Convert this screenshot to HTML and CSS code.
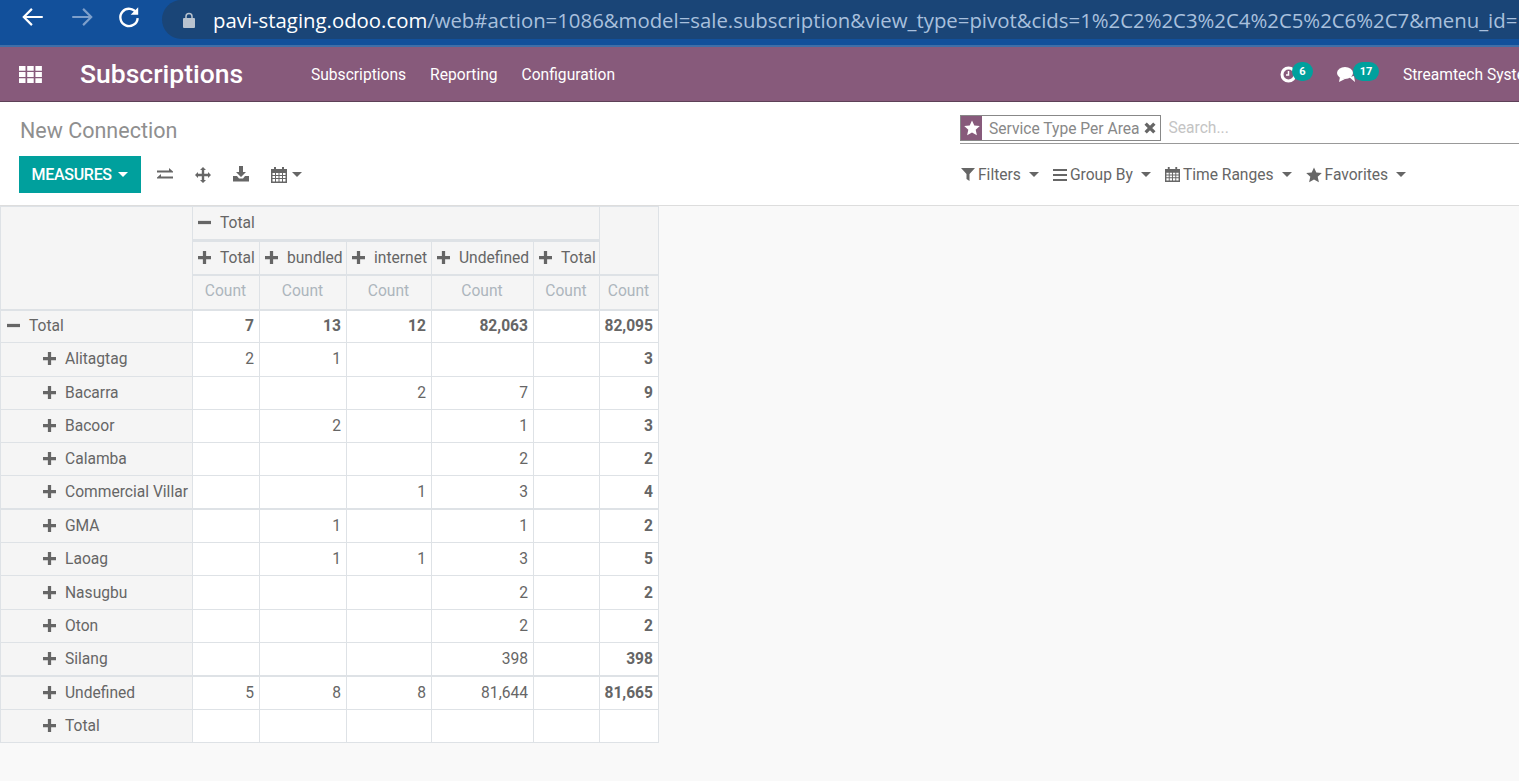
FILE: index.html
```html
<!DOCTYPE html>
<html lang="en">
<head>
  <meta charset="UTF-8">
  <title>Subscriptions</title>
  <link rel="stylesheet" href="styles.css">
</head>
<body>

  <svg class="defs" width="0" height="0">
    <symbol id="plus" viewBox="0 0 12 12"><path d="M4.500 0h3v4.500H12v3H7.500V12h-3V7.500H0v-3h4.500z"/></symbol>
    <symbol id="minus" viewBox="0 0 12 12"><path d="M0 4.500h12v3H0z"/></symbol>
    <symbol id="cal" viewBox="0 0 16 16"><path d="M3 0h2v2h6V0h2v2h3v14H0V2h3zM1.500 6v2h2.500V6zm3.500 0v2h2.500V6zm3.500 0v2H11V6zm3.500 0v2h2.500V6zM1.500 9v2h2.500V9zm3.500 0v2h2.500V9zm3.500 0v2H11V9zm3.500 0v2h2.500V9zM1.500 12v2.500h2.500V12zm3.500 0v2.500h2.500V12zm3.500 0v2.500H11V12zm3.500 0v2.500h2.500V12z" fill-rule="evenodd"/></symbol>
    <symbol id="star" viewBox="0 0 16 16"><path d="M8 .5l2.300 5 5.500.6-4.100 3.700 1.200 5.400L8 12.500l-4.900 2.700 1.200-5.400L.2 6.100l5.500-.6z"/></symbol>
  </svg>

  <div class="browser-bar">
    <svg class="nav-icon first" width="26" height="26" viewBox="0 0 24 24"><path d="M21 12H4M11 4.500L3.500 12l7.500 7.500" fill="none" stroke="#fff" stroke-width="2"/></svg>
    <svg class="nav-icon" width="26" height="26" viewBox="0 0 24 24"><path d="M3 12h17M13 4.500l7.500 7.500-7.500 7.500" fill="none" stroke="#7d9fcb" stroke-width="2"/></svg>
    <svg class="nav-icon reload" width="26" height="26" viewBox="0 0 24 24"><path d="M19 8.500A8 8 0 1 0 20 13" fill="none" stroke="#fff" stroke-width="2.200"/><path d="M20.500 3v7h-7z" fill="#fff"/></svg>
    <div class="url-box">
      <svg class="lock" width="12" height="16" viewBox="0 0 12 16"><path d="M3 7V4.500a3 3 0 0 1 6 0V7" fill="none" stroke="#b9c3cf" stroke-width="1.500"/><rect y="6" width="12" height="10" rx="1" fill="#b9c3cf"/></svg>
      <span class="url"><span class="host">pavi-staging.odoo.com</span>/web#action=1086&amp;model=sale.subscription&amp;view_type=pivot&amp;cids=1%2C2%2C3%2C4%2C5%2C6%2C7&amp;menu_id=</span>
    </div>
  </div>

  <nav class="navbar">
    <svg class="apps" width="23" height="17" viewBox="0 0 23 17"><path d="M0 0h6.500v4.800H0zM8.200 0h6.500v4.800H8.200zM16.400 0h6.500v4.800h-6.500zM0 6.100h6.500v4.800H0zM8.200 6.100h6.500v4.800H8.200zM16.400 6.100h6.500v4.800h-6.500zM0 12.200h6.500V17H0zM8.200 12.200h6.500V17H8.200zM16.400 12.200h6.500V17h-6.500z" fill="#fff"/></svg>
    <span class="brand">Subscriptions</span>
    <a class="menu-item">Subscriptions</a>
    <a class="menu-item">Reporting</a>
    <a class="menu-item">Configuration</a>
    <div class="systray">
      <span class="tray-item">
        <svg width="17" height="17" viewBox="0 0 17 17"><circle cx="8.500" cy="8.500" r="6.500" fill="none" stroke="#fff" stroke-width="3"/><path d="M8.500 5v4H6" fill="none" stroke="#fff" stroke-width="1.500"/></svg>
        <span class="badge">6</span>
      </span>
      <span class="tray-item">
        <svg width="20" height="17" viewBox="0 0 20 17"><ellipse cx="8" cy="7" rx="8" ry="6" fill="#fff"/><path d="M3 11l-1 5 6-3zM12 11l6 5-1-6z" fill="#fff"/></svg>
        <span class="badge wide">17</span>
      </span>
      <span class="company">Streamtech Systems</span>
    </div>
  </nav>

  <div class="control-panel">
    <div class="cp-left">
      <h1 class="breadcrumb">New Connection</h1>
      <div class="cp-buttons">
        <button type="button" class="btn-measures">MEASURES <i class="caret white"></i></button>
        <svg class="tool swap" width="16" height="13" viewBox="0 0 16 13"><path d="M0 2.500h12V0l4 3.500v1H0zM16 8.500H4V6L0 9.500v1h16z" fill="#666"/></svg>
        <svg class="tool" width="16" height="16" viewBox="0 0 16 16"><path d="M8 0l3 3H9.200v3.800H13V5l3 3-3 3V9.200H9.200V13H11l-3 3-3-3h1.800V9.200H3V11L0 8l3-3v1.800h3.800V3H5z" fill="#666"/></svg>
        <svg class="tool lift" width="16" height="16" viewBox="0 0 16 16"><path d="M6 0h4v6h3l-5 5-5-5h3zM0 10h4l2 2.500h4l2-2.500h4v5.500H0z" fill="#666"/></svg>
        <span class="tool cal-tool"><svg class="fill-grey" width="16" height="16"><use href="#cal"/></svg><i class="caret"></i></span>
      </div>
    </div>
    <div class="cp-right">
      <div class="search-view">
        <div class="facet">
          <span class="facet-icon"><svg width="16" height="16" fill="#fff"><use href="#star"/></svg></span>
          <span class="facet-label">Service Type Per Area</span>
          <svg class="facet-x" width="12" height="12" viewBox="0 0 11 11"><path d="M1.500 1.500l8 8M9.500 1.500l-8 8" stroke="#666" stroke-width="3"/></svg>
        </div>
        <input class="search-input" type="text" placeholder="Search...">
      </div>
      <div class="search-options">
        <a class="option">
          <svg width="14" height="13" viewBox="0 0 14 13"><path d="M0 0h14L8.500 6v7l-3-2V6z" fill="#666"/></svg>Filters<i class="caret"></i>
        </a>
        <a class="option">
          <svg width="14" height="12" viewBox="0 0 14 12"><path d="M0 0h14v2H0zM0 5h14v2H0zM0 10h14v2H0z" fill="#666"/></svg>Group By<i class="caret"></i>
        </a>
        <a class="option">
          <svg class="fill-grey" width="15" height="15"><use href="#cal"/></svg>Time Ranges<i class="caret"></i>
        </a>
        <a class="option">
          <svg class="fill-grey" width="16" height="16"><use href="#star"/></svg>Favorites<i class="caret"></i>
        </a>
      </div>
    </div>
  </div>

  <div class="content">
    <table class="pivot">
      <colgroup>
        <col class="c-head"><col class="c1"><col class="c2"><col class="c3"><col class="c4"><col class="c5"><col class="c6">
      </colgroup>
      <thead>
        <tr class="h1">
          <th rowspan="3" class="blank"></th>
          <th colspan="5" class="group"><svg class="ico"><use href="#minus"/></svg>Total</th>
          <th rowspan="2"></th>
        </tr>
        <tr class="h2">
          <th class="group"><svg class="ico"><use href="#plus"/></svg>Total</th>
          <th class="group"><svg class="ico"><use href="#plus"/></svg>bundled</th>
          <th class="group"><svg class="ico"><use href="#plus"/></svg>internet</th>
          <th class="group"><svg class="ico"><use href="#plus"/></svg>Undefined</th>
          <th class="group"><svg class="ico"><use href="#plus"/></svg>Total</th>
        </tr>
        <tr class="h3">
          <th class="measure">Count</th><th class="measure">Count</th><th class="measure">Count</th><th class="measure">Count</th><th class="measure">Count</th><th class="measure">Count</th>
        </tr>
      </thead>
      <tbody>
        <tr class="row-total">
          <th class="lvl0"><svg class="ico"><use href="#minus"/></svg>Total</th>
          <td>7</td><td>13</td><td>12</td><td>82,063</td><td></td><td>82,095</td>
        </tr>
        <tr><th><svg class="ico"><use href="#plus"/></svg>Alitagtag</th><td>2</td><td>1</td><td></td><td></td><td></td><td class="sum">3</td></tr>
        <tr><th><svg class="ico"><use href="#plus"/></svg>Bacarra</th><td></td><td></td><td>2</td><td>7</td><td></td><td class="sum">9</td></tr>
        <tr><th><svg class="ico"><use href="#plus"/></svg>Bacoor</th><td></td><td>2</td><td></td><td>1</td><td></td><td class="sum">3</td></tr>
        <tr><th><svg class="ico"><use href="#plus"/></svg>Calamba</th><td></td><td></td><td></td><td>2</td><td></td><td class="sum">2</td></tr>
        <tr><th><svg class="ico"><use href="#plus"/></svg>Commercial Villar</th><td></td><td></td><td>1</td><td>3</td><td></td><td class="sum">4</td></tr>
        <tr class="split"><th><svg class="ico"><use href="#plus"/></svg>GMA</th><td></td><td>1</td><td></td><td>1</td><td></td><td class="sum">2</td></tr>
        <tr><th><svg class="ico"><use href="#plus"/></svg>Laoag</th><td></td><td>1</td><td>1</td><td>3</td><td></td><td class="sum">5</td></tr>
        <tr><th><svg class="ico"><use href="#plus"/></svg>Nasugbu</th><td></td><td></td><td></td><td>2</td><td></td><td class="sum">2</td></tr>
        <tr><th><svg class="ico"><use href="#plus"/></svg>Oton</th><td></td><td></td><td></td><td>2</td><td></td><td class="sum">2</td></tr>
        <tr><th><svg class="ico"><use href="#plus"/></svg>Silang</th><td></td><td></td><td></td><td>398</td><td></td><td class="sum">398</td></tr>
        <tr class="split"><th><svg class="ico"><use href="#plus"/></svg>Undefined</th><td>5</td><td>8</td><td>8</td><td>81,644</td><td></td><td class="sum">81,665</td></tr>
        <tr><th><svg class="ico"><use href="#plus"/></svg>Total</th><td></td><td></td><td></td><td></td><td></td><td></td></tr>
      </tbody>
    </table>
  </div>

</body>
</html>
```

FILE: styles.css
```css
html, body {
  margin: 0;
  height: 781px;
  overflow: hidden;
}
body {
  font-family: Roboto, "Liberation Sans", sans-serif;
  font-size: 15.600px;
  color: #666;
  background: #f9f9f9;
}
.defs {
  display: block;
  height: 0;
}
.fill-grey {
  fill: #666;
}

/* browser chrome */
.browser-bar {
  display: flex;
  align-items: flex-start;
  height: 47px;
  box-sizing: border-box;
  padding-top: 4px;
  background: #12509b;
  border-bottom: 2px solid #3f6ea8;
  overflow: hidden;
}
.nav-icon {
  flex: none;
  margin-left: 23px;
}
.nav-icon.first {
  margin-left: 20px;
}
.nav-icon.reload {
  margin-left: 21px;
}
.url-box {
  flex: none;
  display: flex;
  align-items: center;
  width: 1500px;
  height: 39px;
  margin: -4px 0 0 20px;
  padding-left: 21px;
  background: #1a4577;
  border-radius: 20px 0 0 20px;
}
.lock {
  flex: none;
  margin-right: 18px;
}
.url {
  font-family: "Open Sans", sans-serif;
  font-size: 20.350px;
  color: #a9c0dd;
  white-space: nowrap;
}
.host {
  color: #fff;
}

/* odoo navbar */
.navbar {
  display: flex;
  align-items: center;
  height: 55px;
  box-sizing: border-box;
  background: #875a7b;
  border-bottom: 1px solid #5d4057;
  color: #fff;
  white-space: nowrap;
  overflow: hidden;
}
.apps {
  margin-left: 19px;
}
.brand {
  width: 231px;
  margin-left: 38px;
  padding-bottom: 2px;
  font-size: 26.500px;
  font-weight: 500;
}
.menu-item {
  margin-right: 24px;
  padding-top: 1px;
}
.systray {
  display: flex;
  align-items: center;
  margin-left: auto;
  width: 239px;
  flex: none;
}
.company {
  padding-top: 1px;
}
.tray-item {
  display: flex;
  align-items: center;
  margin-right: 24px;
}
.badge {
  min-width: 21px;
  margin: -6px 0 0 -5px;
  padding: 3px 0;
  border-radius: 10px;
  background: #00a09d;
  font-size: 11px;
  font-weight: 700;
  text-align: center;
}
.badge.wide {
  min-width: 26px;
  margin-left: -4px;
}

/* control panel */
.control-panel {
  display: grid;
  grid-template-columns: 960px 559px;
  height: 104px;
  box-sizing: border-box;
  background: #fff;
  border-bottom: 1px solid #ddd;
}
.cp-left {
  padding-left: 19px;
}
.breadcrumb {
  margin: 15px 0 12px;
  height: 27px;
  padding-left: 1px;
  font-size: 21.500px;
  line-height: 27px;
  font-weight: 400;
  color: #8f8f8f;
}
.cp-buttons {
  display: flex;
  align-items: center;
}
.btn-measures {
  width: 122px;
  height: 37px;
  padding: 0;
  border: 0;
  background: #00a09d;
  color: #fff;
  font-family: inherit;
  font-size: 16px;
  font-weight: 500;
  letter-spacing: -0.3px;
}
.tool {
  margin-left: 22px;
}
.tool.swap {
  margin-left: 16px;
}
.tool.lift {
  margin-top: -2px;
}
.cal-tool {
  display: flex;
  align-items: center;
}
.caret {
  display: inline-block;
  margin-left: 6px;
  vertical-align: 3px;
  border-top: 5px solid #666;
  border-left: 5px solid transparent;
  border-right: 5px solid transparent;
}
.caret.white {
  border-top-color: #fff;
  margin-left: 3px;
}
.cal-tool .caret {
  margin-left: 5px;
}
.search-view {
  display: flex;
  align-items: center;
  height: 30px;
  margin-top: 11px;
  border-bottom: 1px solid #999;
}
.facet {
  display: flex;
  align-items: center;
  height: 24px;
  border: 1px solid #888;
  background: #fff;
  color: #888;
}
.facet-icon {
  display: flex;
  align-items: center;
  justify-content: center;
  width: 21px;
  height: 24px;
  background: #875a7b;
}
.facet-label {
  margin-left: 7px;
  padding-top: 1px;
}
.facet-x {
  margin: 0 4px;
}
.search-input {
  flex: 1;
  border: 0;
  outline: 0;
  padding: 0 0 0 8px;
  font-family: inherit;
  font-size: 15.600px;
  background: transparent;
}
.search-input::placeholder {
  color: #c4c4c4;
}
.search-options {
  display: flex;
  align-items: center;
  height: 37px;
  margin-top: 12px;
  padding-left: 1px;
}
.option {
  display: flex;
  align-items: center;
  margin-right: 14px;
}
.option svg {
  margin-right: 3px;
}
.option .caret {
  margin-left: 8px;
}

/* pivot table */
.pivot {
  table-layout: fixed;
  border-collapse: collapse;
  width: 658px;
  background: #fff;
  border-left: 1px solid #dee2e6;
  border-right: 1px solid #dee2e6;
}
.c-head { width: 192px; }
.c1 { width: 67px; }
.c2 { width: 87px; }
.c3 { width: 85px; }
.c4 { width: 102px; }
.c5 { width: 66px; }
.c6 { width: 59px; }
.pivot th, .pivot td {
  border: 1px solid #dee2e6;
  padding: 0 5px 0 4px;
  height: 33.300px;
  box-sizing: border-box;
  white-space: nowrap;
  overflow: hidden;
  font-weight: 400;
}
.pivot thead th {
  background: #f5f5f5;
  border-bottom-width: 2px;
}
.pivot .h1 th {
  height: 34px;
}
.pivot .h2 th {
  height: 34px;
}
.pivot .h3 th {
  height: 35px;
  padding-bottom: 2px;
}
.pivot .group {
  text-align: left;
  padding-left: 5px;
}
.pivot .measure {
  text-align: center;
  color: #adb5bd;
}
.pivot .h1 .group {
  border-bottom-width: 3px;
}
.ico {
  width: 13px;
  height: 13px;
  margin-right: 9px;
  fill: #666;
  vertical-align: -1px;
}
.pivot tbody th {
  background: #f5f5f5;
  text-align: left;
  padding-left: 42px;
}
.pivot tbody .lvl0 {
  padding-left: 6px;
}
.pivot td {
  text-align: right;
}
.pivot td.sum, .row-total td {
  font-weight: 700;
}
.split th, .split td {
  border-top-width: 2px;
}
```
